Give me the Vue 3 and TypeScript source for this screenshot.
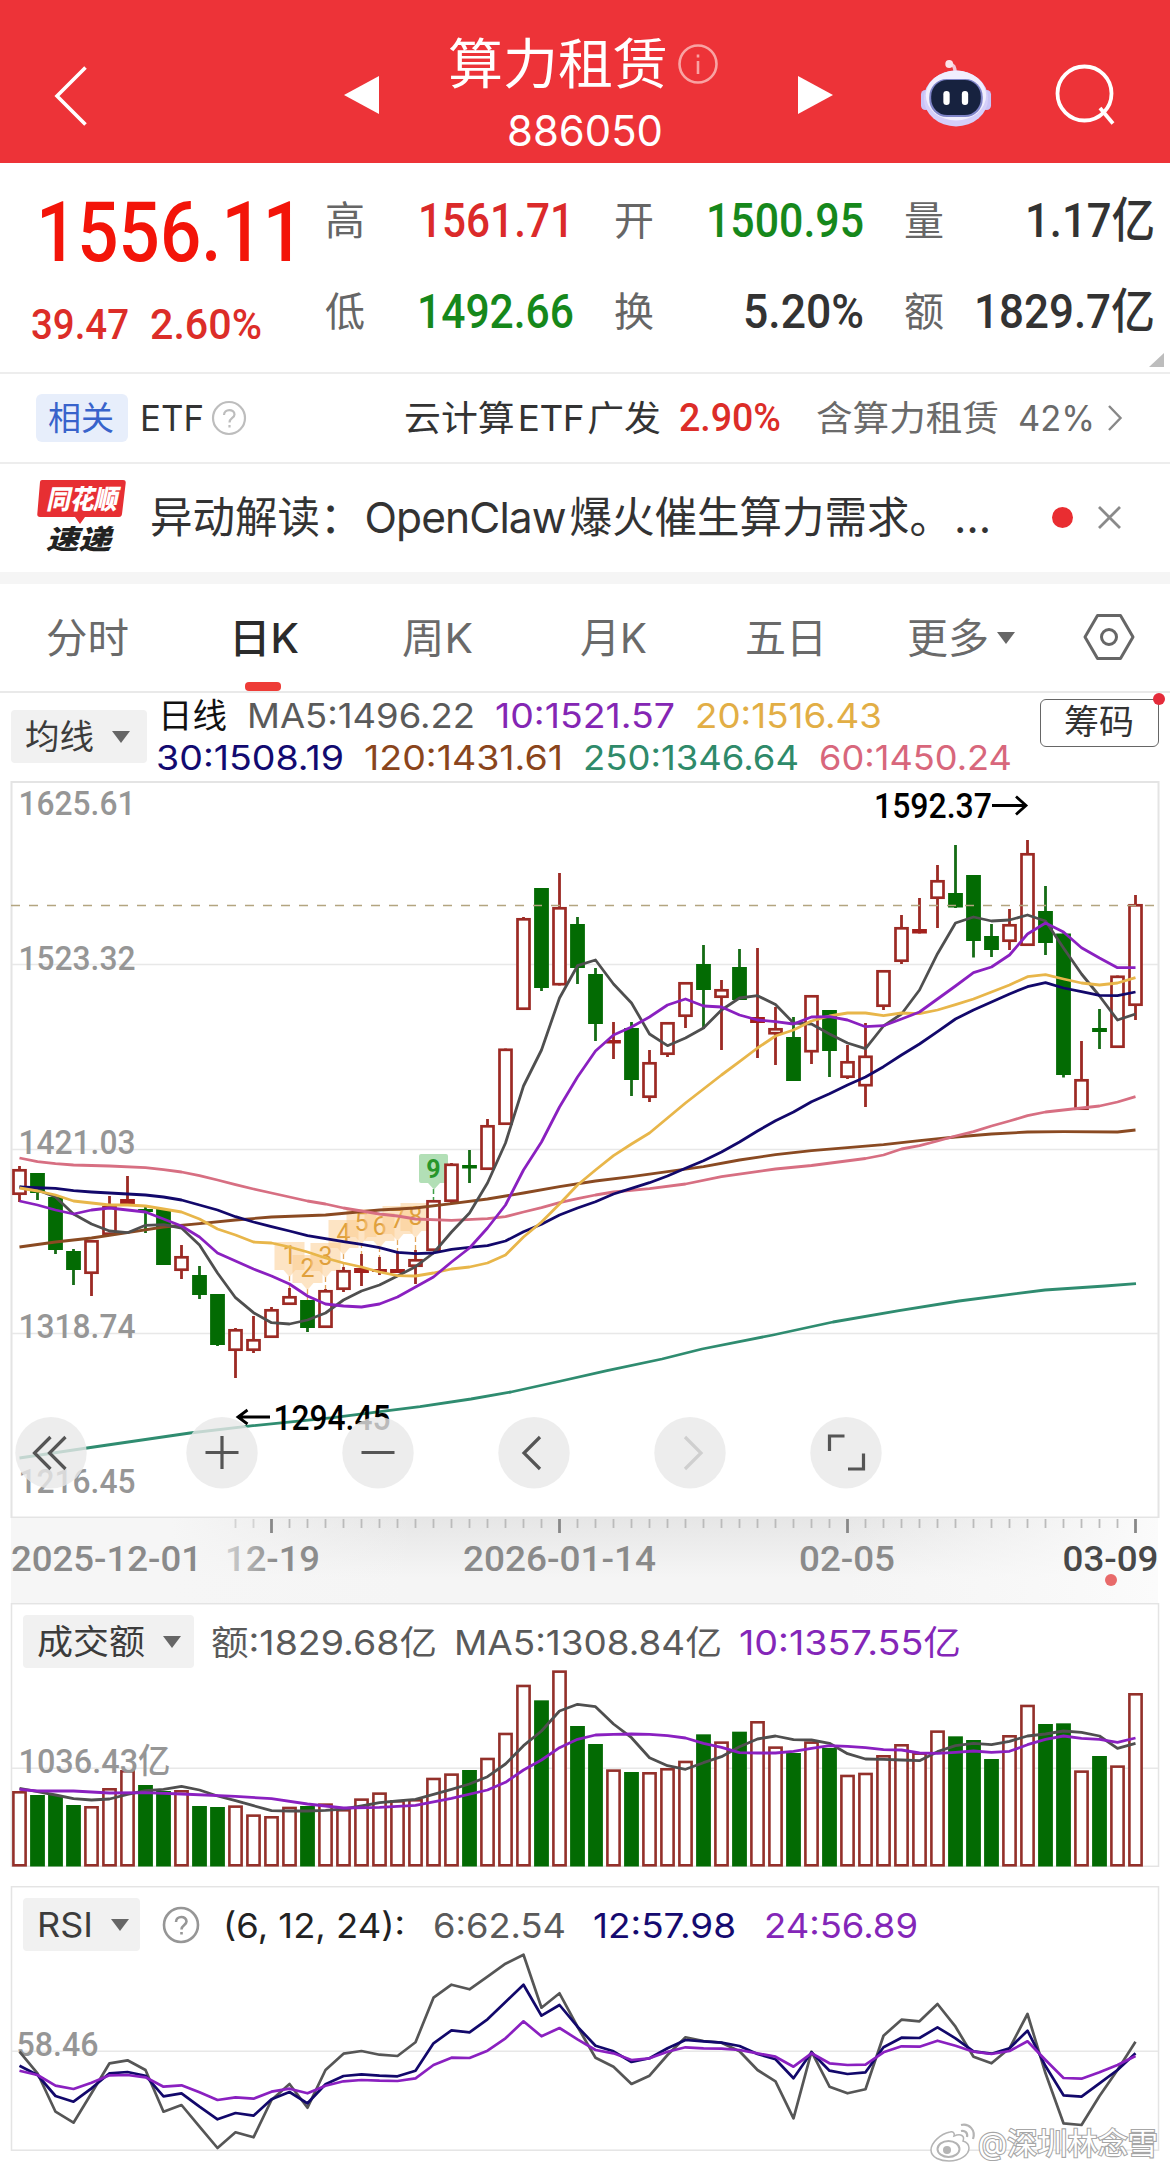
<script setup lang="ts">
// Scales a piece of text horizontally to the given width in pixels.
const vFit = {
  mounted(el: HTMLElement, binding: { value: number }) {
    const natural = el.getBoundingClientRect().width
    if (!natural) return
    el.style.transformOrigin = '0 50%'
    el.style.transform = `scaleX(${binding.value / natural})`
    el.style.marginRight = `${binding.value - natural}px`
  },
}

type Row = [number, number, number, number]

const STEP = 18
const X0 = 19.5
const xAt = (i: number) => X0 + STEP * i

const falling = new Set([1, 2, 3, 7, 8, 10, 11, 16, 25, 29, 31, 32, 34, 38, 40, 43, 45, 52, 53, 54, 57, 58, 60])

// high, body top, body bottom, low
const rows: Row[] = [
  [1166, 1169, 1195, 1202], [1173, 1173, 1193, 1200], [1197, 1197, 1250, 1254], [1249, 1251, 1270, 1285],
  [1240, 1240, 1274, 1296], [1196, 1206, 1235, 1235], [1176, 1199, 1204, 1204], [1206, 1209, 1212, 1233],
  [1209, 1209, 1265, 1265], [1245, 1256, 1271, 1279], [1266, 1275, 1295, 1299], [1294, 1294, 1345, 1346],
  [1328, 1329, 1351, 1378], [1316, 1339, 1351, 1353], [1307, 1309, 1338, 1338], [1288, 1296, 1305, 1305],
  [1300, 1300, 1328, 1332], [1289, 1290, 1328, 1328], [1267, 1270, 1290, 1292], [1254, 1268, 1273, 1286],
  [1257, 1269, 1272, 1275], [1251, 1269, 1273, 1273], [1250, 1259, 1267, 1284], [1200, 1200, 1251, 1251],
  [1163, 1163.5, 1202, 1204], [1150, 1165, 1168.5, 1183], [1119, 1125, 1170, 1170], [1048.5, 1048.5, 1125, 1125],
  [917, 918, 1010, 1010], [888, 888, 988, 991], [873, 907, 985.5, 985.5], [917, 924, 968, 984],
  [968, 974, 1024, 1041], [1022, 1040, 1043.5, 1059], [1022, 1028, 1080, 1096], [1050, 1062, 1098, 1102],
  [1022, 1022, 1055, 1057], [982, 982, 1017, 1028], [945, 964, 990, 1029], [980, 989, 998, 1050],
  [949, 967, 1000, 1000], [948, 1017, 1023, 1058], [1007, 1028, 1034.5, 1065], [1017, 1037, 1081, 1081],
  [995, 995, 1052.5, 1064], [1010, 1010, 1051, 1077], [1045, 1061, 1078, 1079], [1023, 1055.5, 1086.5, 1107],
  [970, 970, 1007, 1010], [915, 927, 962, 964], [898, 929, 933.5, 933.5], [865, 880, 899, 928],
  [845, 893, 907.5, 908], [875, 875, 941, 957.5], [924, 936, 950, 957], [909, 924, 942, 950],
  [840, 853, 946, 946], [886, 911, 943, 955], [933.5, 933.5, 1075, 1077.5], [1041, 1079, 1110, 1110],
  [1009, 1028, 1032, 1049], [975.5, 975.5, 1048, 1048], [895, 904, 1006, 1020],
]

const candles = rows.map(([high, top, bottom, low], i) => ({
  x: xAt(i), high, top, bottom, low, down: falling.has(i),
  flat: bottom - top < 6.5,
}))

const line = (ys: number[], map: (v: number) => number = v => v) =>
  ys.map((y, i) => `${xAt(i)},${map(y).toFixed(1)}`).join(' ')
const sparse = (pts: [number, number][], map: (v: number) => number = v => v) =>
  pts.map(([i, y]) => `${xAt(i)},${map(y).toFixed(1)}`).join(' ')

const averages = [
  { color: '#8a4a22', points: sparse([[0, 1247], [2, 1242], [4, 1238], [6, 1232.7], [8, 1227], [10, 1223.7], [12, 1220], [14, 1217], [17, 1215], [20, 1210], [22, 1208], [24, 1203.7], [26, 1199], [28, 1193], [30, 1186.7], [32, 1181], [34, 1176.7], [36, 1171.7], [38, 1166.7], [40, 1160], [42, 1154.7], [44, 1150.7], [46, 1147.7], [48, 1144.7], [50, 1140.7], [52, 1137], [54, 1134], [56, 1132], [58, 1131.7], [61, 1132], [62, 1130]]) },
  { color: '#d76f82', points: sparse([[0, 1158], [1, 1161.7], [2, 1163.7], [3, 1165], [5, 1166], [7, 1167.7], [8, 1169.7], [9, 1172], [10, 1175.7], [11, 1180], [12, 1184.7], [13, 1189], [14, 1193], [15, 1197], [16, 1201], [17, 1204], [18, 1208], [19, 1211], [20, 1214], [21, 1216], [22, 1219], [24, 1220.3], [26, 1218.7], [27, 1216.7], [28, 1212], [29, 1207.7], [30, 1202.7], [31, 1198.7], [32, 1195], [33, 1192], [35, 1188.7], [37, 1184], [39, 1176.7], [42, 1169], [44, 1165.5], [47, 1158.5], [48, 1155], [49, 1149], [50, 1145.7], [51, 1141], [52, 1136], [53, 1131.7], [54, 1126], [55, 1121], [56, 1115.7], [57, 1112], [58, 1110], [59, 1108], [60, 1106], [61, 1102], [62, 1096.7]]) },
  { color: '#2f8c70', points: '19.5,1458 87,1448 190,1433 253,1425.7 333,1417.7 380,1411.7 420,1406.7 471,1399 511,1392 561,1381 607,1370.7 662,1359 702,1349 773,1335 833,1322 899,1310.7 959,1301 1045,1290 1105,1286 1136,1283.7' },
  { color: '#4f4f4f', points: line([1187, 1190, 1197, 1214, 1224, 1231, 1232.7, 1225.3, 1224.7, 1228, 1245, 1273, 1297.7, 1312.7, 1322.7, 1324, 1320, 1313, 1300, 1291, 1285, 1276, 1266.7, 1253, 1232, 1213, 1183, 1143, 1086, 1050, 998, 965.7, 960, 984, 1003, 1034, 1045.7, 1038, 1028, 1010, 998, 995.7, 1004.5, 1023, 1024, 1034, 1043, 1048.7, 1026, 1014, 990, 953.7, 923, 917, 921, 920, 915, 921, 948, 974, 996, 1020, 1014]) },
  { color: '#12086b', points: sparse([[0, 1187], [2, 1188.3], [3, 1190.7], [4, 1192], [6, 1194], [7, 1195], [8, 1197], [9, 1200], [10, 1205], [11, 1210], [12, 1216.7], [13, 1222], [14, 1226.7], [15, 1231], [16, 1235.7], [17, 1238.7], [18, 1241.7], [19, 1244.3], [20, 1247.7], [21, 1252.3], [22, 1253.7], [23, 1253], [24, 1249.3], [25, 1247.3], [26, 1245.7], [27, 1241], [28, 1231.7], [29, 1224.3], [30, 1215], [31, 1208], [32, 1201.7], [33, 1194], [34, 1188.3], [35, 1182.7], [36, 1176], [37, 1168.3], [38, 1160.7], [39, 1152], [40, 1142], [41, 1131], [42, 1120.7], [43, 1112], [44, 1101.7], [45, 1093.7], [46, 1085], [47, 1077], [48, 1066.7], [49, 1055], [50, 1044], [51, 1031.7], [52, 1019], [53, 1010], [54, 1002], [55, 994], [56, 986.7], [57, 982.7], [58, 988], [59, 991.7], [60, 995.3], [61, 995.7], [62, 992]]) },
  { color: '#e8b64a', points: line([1188, 1191, 1195, 1201, 1203, 1205, 1205, 1206, 1209, 1212, 1219, 1229, 1235, 1242, 1243, 1247, 1252, 1258, 1263, 1267, 1272, 1275.7, 1276, 1273, 1269, 1267, 1263, 1255, 1237, 1222, 1204, 1185, 1170, 1155.7, 1144, 1133, 1118, 1103, 1089, 1075, 1061.7, 1048, 1036, 1030, 1021, 1016, 1013, 1013, 1015.7, 1013, 1013.7, 1010, 1004.7, 999, 992, 985, 976.7, 974.7, 979, 983, 985, 983, 977.7]) },
  { color: '#8a20c0', points: line([1201, 1205, 1210, 1214, 1210, 1208, 1210, 1212, 1219, 1226, 1237, 1253, 1261, 1269, 1276, 1284, 1296, 1304, 1306, 1307, 1304, 1297, 1287, 1277, 1262, 1248, 1228, 1205, 1170, 1142, 1107, 1077, 1051, 1035, 1027, 1017, 1005, 999, 1006, 1007, 1015, 1020, 1021.7, 1024, 1017, 1016.7, 1020, 1026.7, 1025.7, 1019, 1012, 999, 986, 972.7, 967, 955, 934, 923, 932, 947.7, 958, 967.7, 967.7]) },
]

const priceLabels: [string, number][] = [
  ['1625.61', 814.5], ['1523.32', 969.5], ['1421.03', 1153.7], ['1318.74', 1338.3], ['1216.45', 1493],
]

const counts = [1256, 1269, 1257, 1234, 1223, 1227, 1220, 1217].map((y, i) => ({
  n: i + 1, x: xAt(15 + i), y, to: rows[15 + i][0],
}))

const ticks = Array.from({ length: 51 }, (_, k) => {
  const i = 12 + k
  return { x: xAt(i), major: (i - 14) % 16 === 0, opacity: i < 14 ? 0.55 : 1 }
})

const third = (base: number) => (v: number) => base + v / 3

const turnover = [573, 585, 585, 615, 618, 564, 510, 555, 573, 570, 618, 621, 616, 643, 648, 620, 618, 610, 627, 595, 577, 600, 597, 533, 520, 510, 473, 398, 254, 301, 211, 378, 432, 508, 516, 516, 504, 482, 403, 424, 395, 363, 439, 459, 424, 444, 524, 518, 465, 432, 457, 391, 409, 420, 477, 405, 314, 372, 370, 511, 468, 496, 279]
const volBars = turnover.map((v, i) => ({ x: xAt(i), top: 1600 + v / 3, down: falling.has(i) }))

const volLines = [
  { color: '#4f4f4f', points: line([565, 575, 585, 596, 600, 597, 583, 572, 568, 559, 570, 588, 602, 617, 632, 633, 633, 631, 627, 618, 608, 603, 598, 583, 568, 552, 530, 492, 437, 393, 333, 313, 320, 372, 413, 473, 497, 508, 488, 470, 440, 417, 408, 419, 420, 430, 461, 477, 478, 480, 482, 455, 437, 430, 434, 424, 408, 402, 393, 397, 408, 445, 430], third(1600)) },
  { color: '#8a20c0', points: sparse([[0, 568], [1, 573], [3, 573], [5, 579], [7, 578], [9, 582], [12, 589], [14, 596], [16, 612], [18, 624], [20, 622], [22, 616], [24, 595], [26, 570], [27, 547], [28, 510], [29, 480], [30, 443], [31, 418], [32, 405], [33, 403], [34, 402], [35, 403], [36, 407], [37, 414], [38, 430], [39, 442], [40, 458], [41, 459], [42, 459], [43, 454], [44, 445], [45, 437], [46, 439], [47, 443], [48, 449], [49, 450], [50, 459], [51, 460], [52, 457], [53, 453], [54, 457], [55, 454], [56, 434], [57, 418], [58, 408], [59, 415], [60, 418], [61, 427], [62, 414]], third(1600)) },
]

const rsiLines = [
  { color: '#565656', points: line([515, 580, 695, 728, 640, 550, 541, 570, 695, 675, 740, 804, 757, 772, 660, 612, 683, 570, 521, 513, 524, 528, 487, 353, 314, 328, 290, 251, 224, 383, 340, 440, 533, 560, 612, 587, 525, 472, 483, 488, 514, 570, 604, 715, 515, 620, 640, 628, 467, 419, 424, 372, 440, 530, 550, 505, 402, 580, 730, 735, 648, 570, 485], third(1880)) },
  { color: '#12086b', points: line([557, 585, 648, 665, 625, 580, 576, 587, 649, 640, 680, 718, 699, 707, 658, 636, 670, 613, 588, 583, 587, 589, 572, 490, 451, 457, 418, 366, 314, 407, 375, 440, 497, 514, 546, 535, 505, 480, 484, 488, 498, 522, 538, 595, 517, 572, 582, 577, 502, 473, 474, 442, 475, 514, 521, 505, 452, 558, 646, 650, 610, 570, 520], third(1880)) },
  { color: '#8a20c0', points: line([572, 585, 617, 627, 608, 586, 585, 592, 620, 616, 637, 660, 652, 656, 635, 626, 640, 617, 604, 600, 602, 603, 595, 555, 533, 534, 512, 475, 424, 469, 444, 478, 510, 520, 540, 535, 515, 502, 505, 506, 510, 520, 530, 560, 520, 550, 555, 554, 517, 499, 500, 482, 497, 515, 522, 513, 484, 540, 594, 596, 577, 555, 528], third(1880)) },
]

const quotes = [
  { k: '高', v: '1561.71', w: 156, c: 'up' },
  { k: '开', v: '1500.95', w: 158, c: 'down' },
  { k: '量', v: '1.17亿', w: 130, c: '' },
  { k: '低', v: '1492.66', w: 157, c: 'down' },
  { k: '换', v: '5.20%', w: 121, c: '' },
  { k: '额', v: '1829.7亿', w: 181, c: '' },
]

const maTop = [
  { t: '日线', w: 69, c: '#111' },
  { t: 'MA5:1496.22', w: 228, c: '#5a5a5a' },
  { t: '10:1521.57', w: 180, c: '#8426b4' },
  { t: '20:1516.43', w: 187, c: '#e2ae45' },
]
const maBottom = [
  { t: '30:1508.19', w: 188, c: '#120a70' },
  { t: '120:1431.61', w: 199, c: '#8a451c' },
  { t: '250:1346.64', w: 216, c: '#2f8a6a' },
  { t: '60:1450.24', w: 193, c: '#d8677c' },
]
</script>

<template>
  <div class="page">
    <header class="top">
      <svg class="back" width="34" height="62" viewBox="0 0 34 62"><path d="M31.500 2.500L3 31L31.500 59.500" fill="none" stroke="#fff" stroke-width="3.600" /></svg>
      <svg class="prev" width="35" height="38" viewBox="0 0 35 38"><path d="M0 19L35 0V38Z" fill="#fff" /></svg>
      <div class="name">
        <div class="title">
          <span v-fit="220">算力租赁</span>
          <svg width="42" height="42" viewBox="0 0 42 42" fill="none" stroke="#f9a3a3" stroke-width="2.600"><circle cx="21" cy="21" r="18.500" /><path d="M21 18V31M21 11.500V14.500" /></svg>
        </div>
        <div class="code"><span v-fit="156">886050</span></div>
      </div>
      <svg class="next" width="35" height="38" viewBox="0 0 35 38"><path d="M35 19L0 0V38Z" fill="#fff" /></svg>
      <svg class="bot" width="72" height="70" viewBox="0 0 74 70" preserveAspectRatio="none">
        <path d="M36 14C36 8 35 6 30 4" fill="none" stroke="#f3c6d6" stroke-width="3.500" stroke-linecap="round" />
        <circle cx="30" cy="5" r="4" fill="#fbe3ea" />
        <rect x="1" y="31" width="9" height="20" rx="4.500" fill="#c9c3f7" /><rect x="64" y="31" width="9" height="20" rx="4.500" fill="#c9c3f7" />
        <ellipse cx="37" cy="39.500" rx="33" ry="28" fill="#d5cffa" />
        <ellipse cx="37" cy="36.500" rx="31" ry="25" fill="#f1eefe" />
        <rect x="9.500" y="20" width="55" height="38" rx="18" fill="#7f84c8" />
        <rect x="11.500" y="21" width="51" height="35" rx="16.500" fill="#17223f" />
        <rect x="24" y="32" width="6.500" height="14" rx="3.200" fill="#fff" /><rect x="43" y="32" width="6.500" height="14" rx="3.200" fill="#fff" />
      </svg>
      <svg class="find" width="64" height="64" viewBox="0 0 64 64" fill="none" stroke="#fff" stroke-width="3.800"><circle cx="31.500" cy="30.500" r="27" /><path d="M47 45L60 60.500" /></svg>
    </header>

    <section class="quote">
      <div class="last">
        <div class="price din"><span v-fit="268">1556.11</span></div>
        <div class="change din"><span v-fit="98">39.47</span><span v-fit="112">2.60%</span></div>
      </div>
      <div class="grid">
        <div v-for="q in quotes" :key="q.k" class="cell">
          <span class="key">{{ q.k }}</span>
          <span v-fit="q.w" class="din" :class="q.c">{{ q.v }}</span>
        </div>
      </div>
      <svg class="corner" width="15" height="14" viewBox="0 0 15 14"><path d="M15 0V14H0Z" fill="#bdbdbd" /></svg>
    </section>

    <section class="etf">
      <span class="tag"><span v-fit="66">相关</span></span>
      <span v-fit="64" class="etf-name">ETF</span>
      <svg class="help" width="36" height="36" viewBox="0 0 36 36" fill="none" stroke="#bdbdbd" stroke-width="2.200"><circle cx="18" cy="18" r="16" /><path d="M13 15C13 8.500 23.500 8.500 23.500 14.500C23.500 18 18.500 18 18.500 22.500M18.500 25V27.500" /></svg>
      <span v-fit="257" class="fund">云计算<b>ETF</b>广发</span>
      <span v-fit="102" class="din pct">2.90%</span>
      <span v-fit="183" class="hold">含算力租赁</span>
      <span v-fit="77" class="hold share">42%</span>
      <svg class="more" width="16" height="28" viewBox="0 0 16 28"><path d="M2 2L13.500 14L2 26" fill="none" stroke="#888" stroke-width="2.400" /></svg>
    </section>

    <section class="news">
      <svg width="92" height="84" viewBox="0 -4 92 84">
        <path d="M6 1H87Q90 1 89.700 4L86 35Q85.600 38 83 38H49L44 45L39 38H4Q1 38 1.300 35L4 3Q4.200 1 6 1Z" fill="#e72f33" />
        <text x="10" y="30" class="logo" fill="#fff" textLength="71" lengthAdjust="spacingAndGlyphs" font-size="27">同花顺</text>
        <text x="10" y="70" class="logo" fill="#222" textLength="65" lengthAdjust="spacingAndGlyphs" font-size="27">速递</text>
      </svg>
      <span v-fit="802" class="headline">异动解读：<b>OpenClaw</b>爆火催生算力需求。</span>
      <span class="dots">…</span>
      <i class="reddot"></i>
      <svg class="close" width="25" height="25" viewBox="0 0 25 25"><path d="M2 2L23 23M23 2L2 23" stroke="#8a8a8a" stroke-width="2.800" /></svg>
    </section>

    <nav class="tabs">
      <span class="t1"><span v-fit="83">分时</span></span>
      <span class="t2 on"><span v-fit="70">日K</span></span>
      <span class="t3"><span v-fit="71">周K</span></span>
      <span class="t4"><span v-fit="67">月K</span></span>
      <span class="t5"><span v-fit="82">五日</span></span>
      <span class="t6"><span v-fit="82">更多</span><i class="caret"></i></span>
      <svg class="hex" width="54" height="50" viewBox="0 0 54 50" fill="none" stroke="#666" stroke-width="3"><path d="M15.500 3.500H38.500L51 25L38.500 46.500H15.500L3 25Z" stroke-linejoin="round" /><circle cx="27" cy="25" r="7.500" /></svg>
    </nav>

    <section class="legend">
      <span class="pick"><span v-fit="69">均线</span><i class="caret"></i></span>
      <div class="mas">
        <div class="ma first"><span v-for="m in maTop" :key="m.t" v-fit="m.w" :style="{ color: m.c }">{{ m.t }}</span></div>
        <div class="ma"><span v-for="m in maBottom" :key="m.t" v-fit="m.w" :style="{ color: m.c }">{{ m.t }}</span></div>
      </div>
      <span class="chips"><span v-fit="70">筹码</span><i></i></span>
    </section>

    <svg class="chart" width="1170" height="737" viewBox="0 781 1170 737">
      <rect x="11.500" y="782" width="1147" height="735.500" fill="none" stroke="#e4e4e4" stroke-width="2" />
      <path d="M12 964.500H1158M12 1149.500H1158M12 1333.500H1158" stroke="#e8e8e8" stroke-width="1.500" />
      <text v-for="[t, y] in priceLabels" :key="t" x="18.500" :y="y" class="axis" textLength="117" lengthAdjust="spacingAndGlyphs">{{ t }}</text>

      <g v-for="c in counts" :key="c.n">
        <path :d="`M${c.x} ${c.y + 20}V${c.to}`" stroke="#e2a65c" stroke-width="1.300" stroke-dasharray="5 3" />
        <path :d="`M${c.x - 15} ${c.y - 14}h30v28h-9l-6 7l-6 -7h-9z`" fill="#fbc98a" fill-opacity=".5" />
        <text :x="c.x" :y="c.y + 8" text-anchor="middle" class="count">{{ c.n }}</text>
      </g>
      <path d="M433.500 1189V1200" stroke="#3d9e46" stroke-width="1.500" stroke-dasharray="5 3" />
      <path d="M421 1154h25q2 0 2 2v25q0 2 -2 2h-6l-6 6.500l-6 -6.500h-7q-2 0 -2 -2v-25q0 -2 2 -2z" fill="#b2dfb6" />
      <text x="433.500" y="1178" text-anchor="middle" class="nine">9</text>

      <g v-for="(c, i) in candles" :key="i">
        <template v-if="c.down">
          <path :d="`M${c.x} ${c.high}V${c.low}`" stroke="#156b15" stroke-width="2.800" />
          <rect :x="c.x - 7.400" :y="c.top" width="14.800" :height="c.bottom - c.top" fill="#036b03" />
        </template>
        <template v-else>
          <path :d="`M${c.x} ${c.high}V${c.top + 1}M${c.x} ${c.bottom - 1}V${c.low}`" stroke="#9c2a24" stroke-width="2.800" />
          <rect v-if="c.flat" :x="c.x - 7.400" :y="c.top" width="14.800" :height="c.bottom - c.top" fill="#a3201c" />
          <rect v-else :x="c.x - 6" :y="c.top + 1.300" width="12" :height="c.bottom - c.top - 2.600" fill="#fff" stroke="#9c2a24" stroke-width="2.700" />
        </template>
      </g>
      <path d="M11 905.500H1156" stroke="#b3a580" stroke-width="1.400" stroke-dasharray="9 9" />
      <polyline v-for="(a, i) in averages" :key="i" :points="a.points" fill="none" :stroke="a.color" stroke-width="2.800" stroke-linejoin="round" />

      <g class="mark">
        <text x="874" y="818" textLength="118" lengthAdjust="spacingAndGlyphs">1592.37</text>
        <path d="M992 805.500H1026M1016 796.500L1026 805.500L1016 814.500" />
        <text x="273.500" y="1430" textLength="117" lengthAdjust="spacingAndGlyphs">1294.45</text>
        <path d="M270 1417H238M247.500 1410L238 1417L247.500 1424" />
      </g>

      <g fill="#e9e9e9" fill-opacity=".8">
        <circle v-for="cx in [51, 222, 378, 534, 690, 846]" :key="cx" :cx="cx" cy="1452.700" r="35.700" />
      </g>
      <g fill="none" stroke="#555" stroke-width="3.200">
        <path d="M50.500 1437L34.500 1453L50.500 1469M65.500 1437L49.500 1453L65.500 1469" />
        <path d="M205.500 1452.500H238.500M222 1436V1469" />
        <path d="M361.500 1452.500H394.500" />
        <path d="M540 1437L524 1453L540 1469" />
        <path d="M685 1437L701 1453L685 1469" stroke="#cfcfcf" />
        <path d="M844.500 1436H829.500V1451M863.500 1453.500V1469H848" />
      </g>
    </svg>

    <svg class="dates" width="1170" height="85" viewBox="0 1518 1170 85">
      <defs>
        <linearGradient id="shade" x1="0" y1="0" x2="0" y2="1"><stop offset="0" stop-color="#e6e6e6" /><stop offset=".7" stop-color="#f5f5f5" /></linearGradient>
        <linearGradient id="sides" x1="0" y1="0" x2="1" y2="0"><stop offset="0" stop-color="#f6f6f6" /><stop offset=".14" stop-color="#f6f6f6" /><stop offset=".35" stop-color="#f6f6f6" stop-opacity="0" /><stop offset=".72" stop-color="#f8f8f8" stop-opacity="0" /><stop offset="1" stop-color="#fbfbfb" /></linearGradient>
        <linearGradient id="fade" gradientUnits="userSpaceOnUse" x1="225" y1="0" x2="275" y2="0"><stop offset="0" stop-color="#d2d2d2" /><stop offset="1" stop-color="#8c8c8c" /></linearGradient>
      </defs>
      <rect x="11" y="1518" width="1147" height="85" fill="url(#shade)" />
      <rect x="11" y="1518" width="1147" height="85" fill="url(#sides)" />
      <path v-for="t in ticks" :key="t.x" :d="`M${t.x} 1519V${t.major ? 1533 : 1528}`" :stroke="t.major ? '#888' : '#bbb'" :stroke-width="t.major ? 2.800 : 1.800" :opacity="t.opacity" />
      <g class="date">
        <text x="11" y="1571" textLength="191" lengthAdjust="spacingAndGlyphs">2025-12-01</text>
        <text x="225" y="1571" textLength="95" lengthAdjust="spacingAndGlyphs" class="faded">12-19</text>
        <text x="463" y="1571" textLength="193" lengthAdjust="spacingAndGlyphs">2026-01-14</text>
        <text x="799" y="1571" textLength="96" lengthAdjust="spacingAndGlyphs">02-05</text>
        <text x="1062.500" y="1571" textLength="96" lengthAdjust="spacingAndGlyphs" class="today">03-09</text>
      </g>
      <circle cx="1111" cy="1580" r="6" fill="#e86a6a" />
    </svg>

    <section class="panel vol">
      <div class="bar">
        <span class="pick"><span v-fit="108">成交额</span><i class="caret"></i></span>
        <span v-fit="226" class="g">额:1829.68亿</span>
        <span v-fit="268" class="g">MA5:1308.84亿</span>
        <span v-fit="222" class="p">10:1357.55亿</span>
      </div>
      <svg class="plot" width="1170" height="264" viewBox="0 1603 1170 264">
        <rect x="11.500" y="1603.700" width="1147" height="262.600" fill="none" stroke="#e4e4e4" stroke-width="1.500" />
        <path d="M12 1768.300H1158" stroke="#e8e8e8" stroke-width="1.500" />
        <g v-for="(b, i) in volBars" :key="i">
          <rect v-if="b.down" :x="b.x - 7.400" :y="b.top" width="14.800" :height="1866.500 - b.top" fill="#036b03" />
          <rect v-else :x="b.x - 6.100" :y="b.top + 1.300" width="12.200" :height="1864 - b.top" fill="#fff" stroke="#93302a" stroke-width="2.600" />
        </g>
        <text x="18.500" y="1772.700" class="axis" textLength="152" lengthAdjust="spacingAndGlyphs">1036.43亿</text>
        <polyline v-for="(l, i) in volLines" :key="i" :points="l.points" fill="none" :stroke="l.color" stroke-width="2.800" stroke-linejoin="round" />
      </svg>
    </section>

    <section class="panel rsi">
      <div class="bar">
        <span class="pick"><span v-fit="56">RSI</span><i class="caret"></i></span>
        <svg class="ask" width="38" height="38" viewBox="0 0 38 38" fill="none" stroke="#969696" stroke-width="2.600"><circle cx="19" cy="19" r="17" /><path d="M14 16C14 9.500 24.500 9.500 24.500 15.500C24.500 19 19.500 19 19.500 23.500M19.500 26V28.500" /></svg>
        <span v-fit="182" class="k">(6, 12, 24):</span>
        <span v-fit="133" class="g">6:62.54</span>
        <span v-fit="143" class="n">12:57.98</span>
        <span v-fit="154" class="p">24:56.89</span>
      </div>
      <svg class="plot" width="1170" height="284" viewBox="0 1886 1170 284">
        <rect x="11.500" y="1886.700" width="1147" height="263.500" fill="none" stroke="#e4e4e4" stroke-width="1.500" />
        <path d="M12 2051.300H1158" stroke="#e8e8e8" stroke-width="1.500" />
        <text x="16.500" y="2055.700" class="axis" textLength="82" lengthAdjust="spacingAndGlyphs">58.46</text>
        <polyline v-for="(l, i) in rsiLines" :key="i" :points="l.points" fill="none" :stroke="l.color" stroke-width="2.700" stroke-linejoin="round" />
        <g class="sign">
          <path d="M950 2132C940 2134 931 2143 931 2150C931 2158 941 2161 949 2161C960 2161 969 2155 969 2148C969 2144 966 2142 963 2141C965 2136 961 2133 954 2136C955 2133 953 2131 950 2132Z" fill="#fff" stroke="#b4b4b4" stroke-width="1.500" />
          <ellipse cx="948.500" cy="2149" rx="11" ry="8" fill="none" stroke="#b4b4b4" stroke-width="2" />
          <circle cx="947" cy="2150" r="4" fill="#b4b4b4" />
          <path d="M961 2125C969 2123 976 2130 973 2139M961 2131C965 2130 968 2133 967 2137" fill="none" stroke="#b4b4b4" stroke-width="2.200" />
          <text x="978" y="2154" textLength="180" lengthAdjust="spacingAndGlyphs">@深圳林念雪</text>
        </g>
      </svg>
    </section>
  </div>
</template>

<style>
body { background: #fff; }
</style>

<style scoped>
.page {
  width: 1170px;
  height: 2170px;
  overflow: hidden;
  background: #fff;
  color: #333;
  font-family: Inter, "Noto Sans CJK SC", sans-serif;
  line-height: 1;
}
.page span { white-space: nowrap; flex: none; display: inline-block; }
.page b { font-weight: 400; }
svg { display: block; flex: none; }
.din { font-family: Roboto, "Noto Sans CJK SC", sans-serif; font-weight: 500; }
.up { color: #db2a2a; }
.down { color: #16881b; }

.top { display: flex; height: 163px; background: #ed3338; color: #fff; box-sizing: border-box; padding-left: 54px; }
.back { margin-top: 65px; }
.prev { margin: 76px 0 0 256px; }
.name { width: 419px; box-sizing: border-box; padding-left: 69px; }
.title { display: flex; align-items: center; height: 58px; margin-top: 36px; font-size: 54px; }
.title svg { margin-left: 9px; margin-top: -2px; }
.code { margin: 16px 0 0 59px; font-size: 42px; }
.next { margin-top: 76px; }
.bot { margin: 59px 0 0 87px; }
.find { margin: 63px 0 0 61px; }

.quote { position: relative; display: flex; height: 209px; border-bottom: 2px solid #ededed; }
.last { width: 325px; }
.price { margin: 28px 0 0 36px; font-size: 83px; line-height: 83px; height: 83px; color: #f31409; }
.change { display: flex; gap: 21px; margin: 30px 0 0 31px; font-size: 42px; color: #dc2d28; }
.grid { display: grid; grid-template-columns: 249px 250px 251px; column-gap: 40px; grid-template-rows: 91px 92px; padding-top: 12px; }
.cell { display: flex; justify-content: space-between; align-items: center; font-size: 48px; }
.key { font-size: 40px; color: #666; }
.cell .din { font-size: 48px; line-height: 60px; }
.corner { position: absolute; right: 6px; bottom: 5px; }

.etf { display: flex; align-items: center; height: 88px; border-bottom: 2px solid #ededed; font-size: 35px; color: #333; padding-left: 36px; }
.page .tag { display: flex; align-items: center; width: 92px; height: 48px; line-height: 48px; box-sizing: border-box; padding-left: 12px; border-radius: 6px; background: #e7eefb; color: #3863cb; font-size: 33px; }
.etf-name { margin-left: 12px; }
.help { margin-left: 7px; }
.fund { margin-left: 157px; }
.fund b { margin: 0 3px; letter-spacing: -0.5px; }
.pct { margin-left: 18px; font-size: 39px; color: #dc2d28; }
.hold { margin-left: 35px; color: #6a6a6a; }
.share { margin-left: 19px; }
.more { margin-left: 12px; }

.news { display: flex; align-items: center; height: 106px; padding: 0 0 2px 36px; font-size: 43px; }
.logo { font-family: "Noto Sans CJK SC", sans-serif; font-weight: 900; font-style: italic; }
.headline { margin-left: 22px; }
.headline b { margin: 0 4px 0 2px; letter-spacing: -0.900px; }
.dots { width: 44px; margin-left: 2px; }
.reddot { width: 21px; height: 21px; border-radius: 50%; background: #e92d31; margin-left: 54px; }
.close { margin-left: 24px; }

.tabs { display: flex; height: 107px; border-top: 12px solid #f5f5f5; border-bottom: 2px solid #e9e9e9; font-size: 41px; color: #6a6a6a; line-height: 108px; }
.tabs > span { position: relative; }
.t1 { width: 183px; padding-left: 46px; }
.t2 { width: 173px; }
.t3 { width: 178px; }
.t4 { width: 165px; }
.t5 { width: 162px; }
.tabs .t6 { display: flex; align-items: center; width: 175px; gap: 8px; }
.on { color: #2b2b2b; font-weight: 500; }
.on::after { content: ""; position: absolute; left: 16px; bottom: 0; width: 36px; height: 9px; border-radius: 4px; background: #ee3c37; }
.hex { margin-top: 28px; }
.caret { width: 0; height: 0; border: 9px solid transparent; border-top: 12px solid #666; border-bottom: 0; flex: none; }

.legend { display: flex; height: 90px; margin-top: -2px; position: relative; }
.pick { background: #f1f1f1; border-radius: 4px; box-sizing: border-box; height: 53px; color: #3c3c3c; }
.page .pick { display: flex; align-items: center; gap: 18px; font-size: 34px; padding-left: 14px; }
.legend .pick { width: 136px; margin: 19px 0 0 11px; }
.mas { width: 893px; padding: 4px 0 0 9px; box-sizing: border-box; }
.ma { display: flex; align-items: center; gap: 20px; height: 42px; font-size: 34px; }
.first { padding-left: 2px; }
.chips { position: relative; width: 119px; height: 48px; margin-top: 8px; box-sizing: border-box; border: 1.500px solid #666; border-radius: 6px; padding-left: 23px; font-size: 34px; line-height: 44px; }
.chips i { position: absolute; right: -7px; top: -7px; width: 12px; height: 12px; border-radius: 50%; background: #e42b3a; }

.axis { font: 500 34px Roboto, "Noto Sans CJK SC", sans-serif; fill: #969696; }
.mark text { font: 500 35px Roboto, sans-serif; fill: #000; }
.mark path { fill: none; stroke: #000; stroke-width: 2.800; }
.count { font: 25px Roboto, sans-serif; fill: #e0a03c; }
.nine { font: 700 25px Roboto, sans-serif; fill: #27962b; }
.date text { font: 500 35px Roboto, sans-serif; fill: #8a8a8a; }
.date .faded { fill: url(#fade); }
.date .today { fill: #484848; }

.panel { position: relative; }
.vol { height: 283px; }
.rsi { height: 284px; }
.bar { position: absolute; z-index: 1; left: 23px; top: 12px; display: flex; align-items: center; height: 53px; font-size: 34px; }
.bar > span:not(.pick) { padding-top: 2px; }
.vol .pick { width: 171px; }
.vol .g, .vol .p { margin-left: 17px; }
.rsi .pick { width: 117px; }
.ask { margin: 0 23px 0 22px; }
.g { color: #5a5a5a; }
.n { color: #150a70; margin-left: 27px; }
.k { color: #222; }
.rsi .g { margin-left: 28px; }
.p { color: #8426b8; }
.rsi .p { margin-left: 28px; }
.sign text { font: 30px Inter, "Noto Sans CJK SC", sans-serif; fill: #fff; stroke: #a6a6a6; stroke-width: 2.200px; paint-order: stroke; }
</style>
